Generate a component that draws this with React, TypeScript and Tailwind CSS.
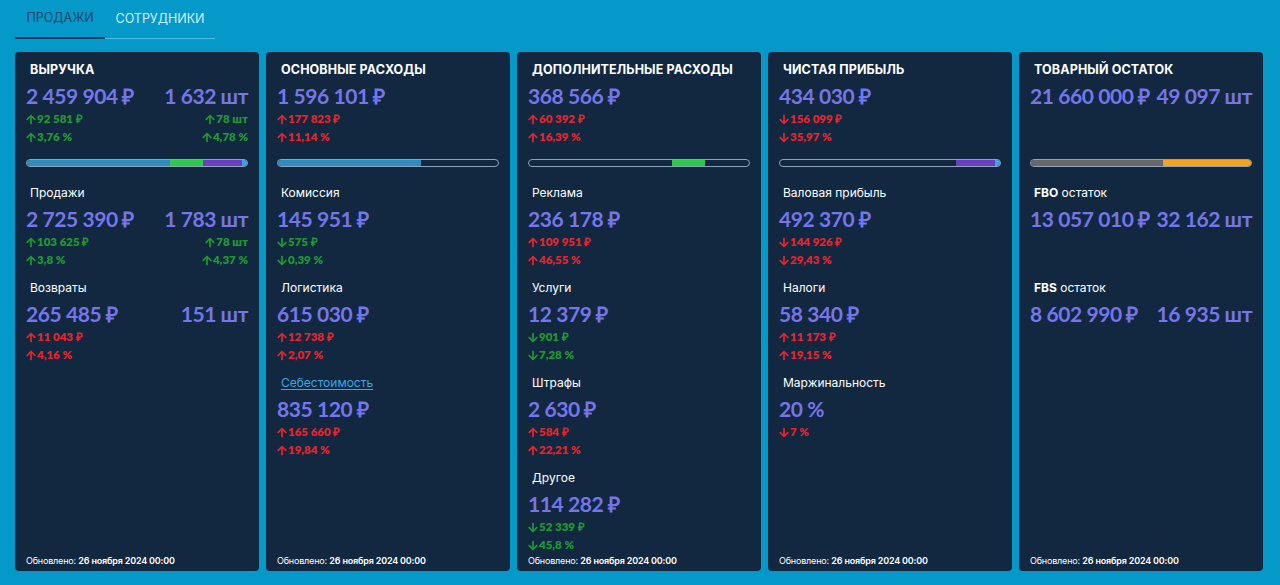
import React from 'react';
import { FaArrowUp, FaArrowDown } from 'react-icons/fa';

type Delta = { text: string; dir: 'up' | 'down'; tone: 'good' | 'bad' };

type Section = {
  label: React.ReactNode;
  link?: boolean;
  value: string;
  qty?: string;
  left?: Delta[];
  right?: Delta[];
  rows?: number;
};

type Seg = { w: number; c: string };

type CardData = {
  title: string;
  main: Section;
  bar: Seg[];
  sections: Section[];
};

const NUM = "font-['Lato',sans-serif]";

function DeltaLine({ d, align }: { d?: Delta; align: 'left' | 'right' }) {
  if (!d) return <div className="h-[18px]" />;
  const color = d.tone === 'good' ? 'text-[#1f9a30]' : 'text-[#e8242c]';
  return (
    <div
      className={`h-[18px] flex items-center gap-[1px] text-[11.5px] font-extrabold whitespace-nowrap ${NUM} ${color} ${
        align === 'right' ? 'justify-end' : ''
      }`}
    >
      {d.dir === 'up' ? <FaArrowUp className="w-[10px] h-[11px]" /> : <FaArrowDown className="w-[10px] h-[11px]" />}
      <span>{d.text}</span>
    </div>
  );
}

function Block({ s, isTitle, title }: { s: Section; isTitle?: boolean; title?: string }) {
  const rows = s.rows ?? 2;
  return (
    <div>
      {isTitle ? (
        <div className="h-[24px] pl-[4px] flex items-center text-[12.5px] font-bold text-white tracking-[0.01em] font-['Inter',sans-serif]">
          {title}
        </div>
      ) : s.link ? (
        <div className="h-[24px] pl-[4px] flex items-center text-[12px] text-[#3ba6e4] underline underline-offset-2 font-['Inter',sans-serif]">
          <span>{s.label}</span>
        </div>
      ) : (
        <div className="h-[24px] pl-[4px] flex items-center text-[12px] text-white font-['Inter',sans-serif]">
          <span>{s.label}</span>
        </div>
      )}
      <div
        className={`h-[28px] flex items-center justify-between whitespace-nowrap text-[21px] font-bold text-[#7775ea] ${NUM} tracking-[-0.02em]`}
      >
        <span>{s.value}</span>
        {s.qty && <span>{s.qty}</span>}
      </div>
      {Array.from({ length: rows }).map((_, i) => (
        <div key={i} className="flex justify-between">
          <DeltaLine d={s.left?.[i]} align="left" />
          <DeltaLine d={s.right?.[i]} align="right" />
        </div>
      ))}
    </div>
  );
}

function Bar({ segs }: { segs: Seg[] }) {
  return (
    <div className="mt-[13px] mb-[14px] h-[8px] rounded-full border border-[#8ea3b8] overflow-hidden flex">
      {segs.map((s, i) => (
        <div key={i} className="h-full" style={{ width: `${s.w}%`, backgroundColor: s.c }} />
      ))}
    </div>
  );
}

const up = (text: string, tone: 'good' | 'bad'): Delta => ({ text, dir: 'up', tone });
const down = (text: string, tone: 'good' | 'bad'): Delta => ({ text, dir: 'down', tone });

const cards: CardData[] = [
  {
    title: 'ВЫРУЧКА',
    main: {
      label: '',
      value: '2 459 904 ₽',
      qty: '1 632 шт',
      left: [up('92 581 ₽', 'good'), up('3,76 %', 'good')],
      right: [up('78 шт', 'good'), up('4,78 %', 'good')],
    },
    bar: [
      { w: 65, c: '#2f8cbd' },
      { w: 15, c: '#2ec84c' },
      { w: 17.5, c: '#6a3fc2' },
      { w: 2.5, c: '#3ea3e6' },
    ],
    sections: [
      {
        label: 'Продажи',
        value: '2 725 390 ₽',
        qty: '1 783 шт',
        left: [up('103 625 ₽', 'good'), up('3,8 %', 'good')],
        right: [up('78 шт', 'good'), up('4,37 %', 'good')],
      },
      {
        label: 'Возвраты',
        value: '265 485 ₽',
        qty: '151 шт',
        left: [up('11 043 ₽', 'bad'), up('4,16 %', 'bad')],
      },
    ],
  },
  {
    title: 'ОСНОВНЫЕ РАСХОДЫ',
    main: { label: '', value: '1 596 101 ₽', left: [up('177 823 ₽', 'bad'), up('11,14 %', 'bad')] },
    bar: [{ w: 65, c: '#2f8cbd' }],
    sections: [
      { label: 'Комиссия', value: '145 951 ₽', left: [down('575 ₽', 'good'), down('0,39 %', 'good')] },
      { label: 'Логистика', value: '615 030 ₽', left: [up('12 738 ₽', 'bad'), up('2,07 %', 'bad')] },
      { label: 'Себестоимость', link: true, value: '835 120 ₽', left: [up('165 660 ₽', 'bad'), up('19,84 %', 'bad')] },
    ],
  },
  {
    title: 'ДОПОЛНИТЕЛЬНЫЕ РАСХОДЫ',
    main: { label: '', value: '368 566 ₽', left: [up('60 392 ₽', 'bad'), up('16,39 %', 'bad')] },
    bar: [
      { w: 65, c: 'transparent' },
      { w: 15, c: '#2ec84c' },
    ],
    sections: [
      { label: 'Реклама', value: '236 178 ₽', left: [up('109 951 ₽', 'bad'), up('46,55 %', 'bad')] },
      { label: 'Услуги', value: '12 379 ₽', left: [down('901 ₽', 'good'), down('7,28 %', 'good')] },
      { label: 'Штрафы', value: '2 630 ₽', left: [up('584 ₽', 'bad'), up('22,21 %', 'bad')] },
      { label: 'Другое', value: '114 282 ₽', left: [down('52 339 ₽', 'good'), down('45,8 %', 'good')] },
    ],
  },
  {
    title: 'ЧИСТАЯ ПРИБЫЛЬ',
    main: { label: '', value: '434 030 ₽', left: [down('156 099 ₽', 'bad'), down('35,97 %', 'bad')] },
    bar: [
      { w: 80, c: 'transparent' },
      { w: 17.5, c: '#6a3fc2' },
      { w: 2.5, c: '#3ea3e6' },
    ],
    sections: [
      { label: 'Валовая прибыль', value: '492 370 ₽', left: [down('144 926 ₽', 'bad'), down('29,43 %', 'bad')] },
      { label: 'Налоги', value: '58 340 ₽', left: [up('11 173 ₽', 'bad'), up('19,15 %', 'bad')] },
      { label: 'Маржинальность', value: '20 %', left: [down('7 %', 'bad')], rows: 1 },
    ],
  },
  {
    title: 'ТОВАРНЫЙ ОСТАТОК',
    main: { label: '', value: '21 660 000 ₽', qty: '49 097 шт' },
    bar: [
      { w: 60, c: '#686868' },
      { w: 40, c: '#f6a21e' },
    ],
    sections: [
      {
        label: (
          <>
            <b className="font-bold">FBO</b> остаток
          </>
        ),
        value: '13 057 010 ₽',
        qty: '32 162 шт',
      },
      {
        label: (
          <>
            <b className="font-bold">FBS</b> остаток
          </>
        ),
        value: '8 602 990 ₽',
        qty: '16 935 шт',
      },
    ],
  },
];

function Card({ c }: { c: CardData }) {
  return (
    <div className="flex-1 min-w-0 bg-[#112840] rounded-[4px] px-[11px] pt-[6px] pb-[3px] flex flex-col">
      <Block s={c.main} isTitle title={c.title} />
      <Bar segs={c.bar} />
      <div className="flex flex-col gap-[7px]">
        {c.sections.map((s, i) => (
          <Block key={i} s={s} />
        ))}
      </div>
      <div className="mt-auto h-[14px] flex items-center text-[9px] text-white font-['Inter',sans-serif] tracking-[-0.02em]">
        Обновлено:&nbsp;<span className="font-semibold">26 ноября 2024 00:00</span>
      </div>
    </div>
  );
}

export default function App() {
  return (
    <div className="w-[1280px] h-[585px] bg-[#0499c8] pl-[15px] pr-[17px] pb-[14px] flex flex-col font-['Inter',sans-serif]">
      <div className="flex h-[40px] w-[200px]">
        <div className="w-[90px] flex items-center justify-center text-[12.5px] text-[#1d4868] border-b-2 border-[#123a5a]">
          ПРОДАЖИ
        </div>
        <div className="w-[110px] flex items-center justify-center text-[12.5px] text-[#d6eef8] border-b border-[#56bde0]">
          СОТРУДНИКИ
        </div>
      </div>
      <div className="mt-[13px] flex-1 flex gap-[7px]">
        {cards.map((c, i) => (
          <Card key={i} c={c} />
        ))}
      </div>
    </div>
  );
}
